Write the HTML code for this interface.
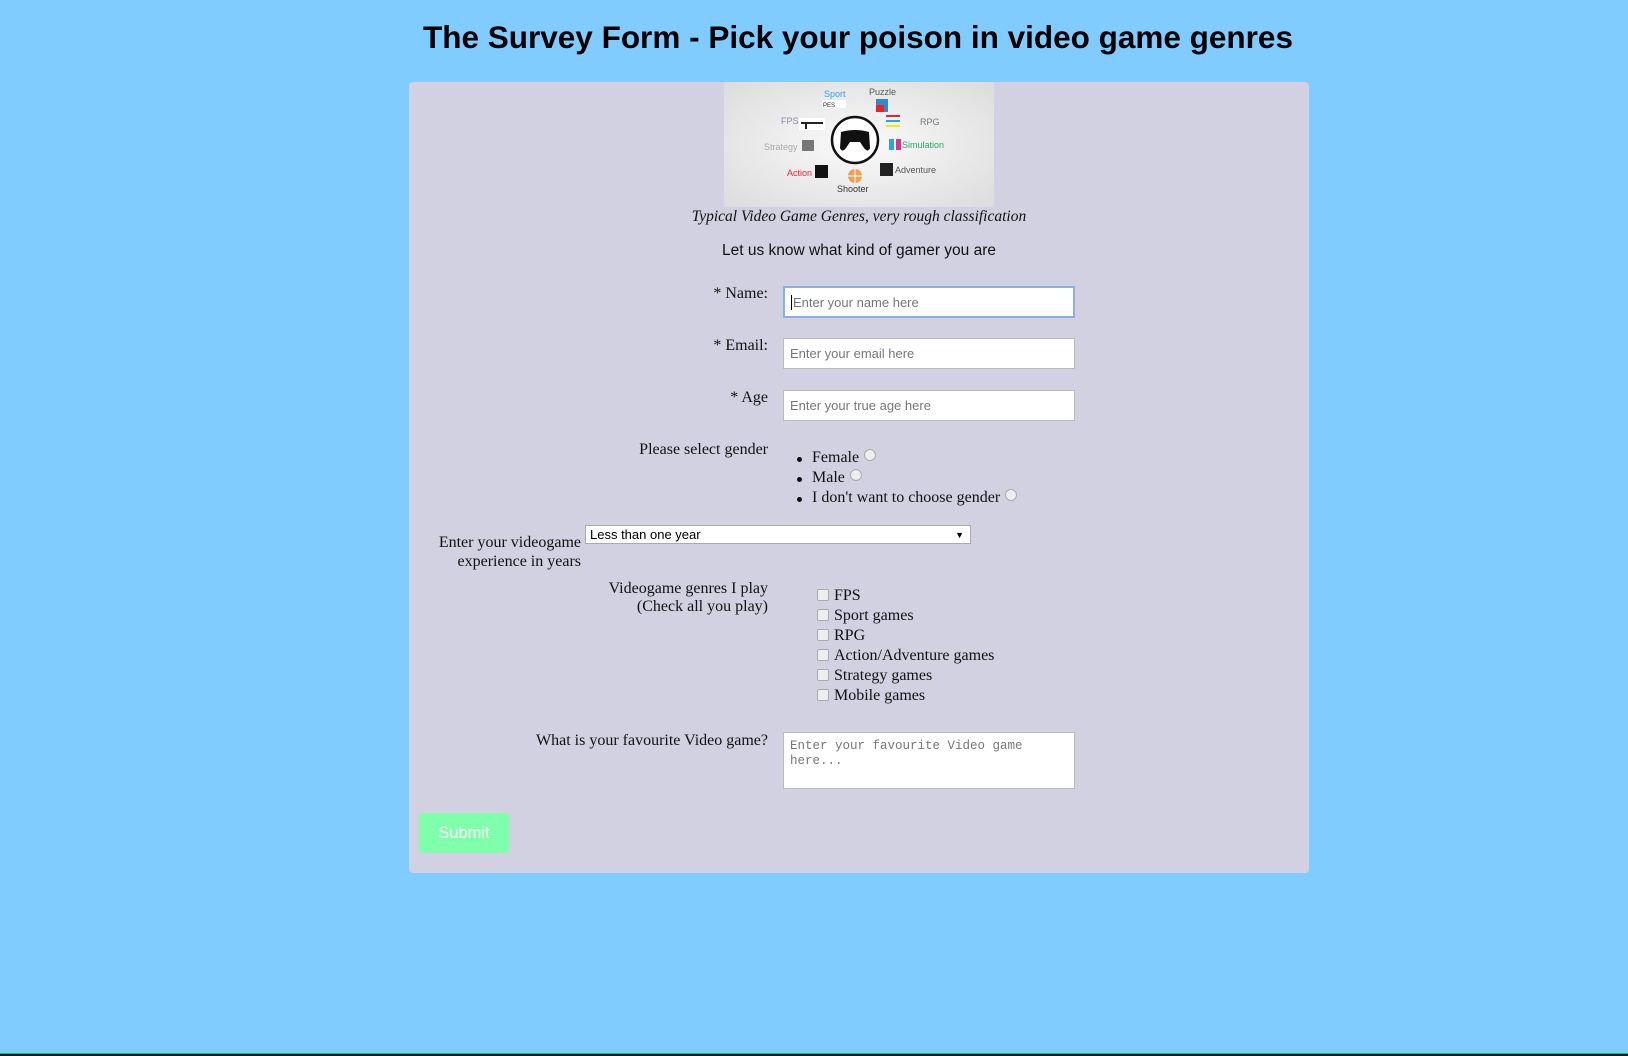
<!DOCTYPE html>
<html><head><meta charset="utf-8">
<style>
*{margin:0;padding:0;box-sizing:border-box}
html,body{width:1628px;height:1056px;overflow:hidden}
body{background:#80cbff;position:relative;font-family:"Liberation Serif",serif;color:#111;font-size:16px}
.bottom{position:absolute;left:0;top:1053px;width:1628px;height:3px;background:#1a1a1a;border-top:1px solid #1bb07a}
h1{position:absolute;left:300px;width:1116px;top:19px;text-align:center;font-family:"Liberation Sans",sans-serif;font-weight:bold;font-size:31.5px;color:#000}
.panel{position:absolute;left:409px;top:82px;width:900px;height:791px;background:#d1d1e1;border-radius:4px}
.a{position:absolute;white-space:nowrap}
.r{text-align:right}
.inp{position:absolute;background:#fff;border:1px solid #bbb;font-family:"Liberation Sans",sans-serif;font-size:13px;color:#777;padding-left:6px;display:flex;align-items:center}
.rad{display:inline-block;width:12px;height:12px;border-radius:50%;border:1px solid #aaa;background:#eee;vertical-align:1px;margin-left:5px}
.cb{position:absolute;width:12px;height:12px;border:1px solid #aaa;border-radius:2px;background:#eee}
.dot{position:absolute;width:5px;height:5px;border-radius:50%;background:#111}
</style></head><body>
<h1>The Survey Form - Pick your poison in video game genres</h1>
<div class="panel"></div>
<svg style="position:absolute;left:724px;top:82px" width="270" height="125" viewBox="0 0 270 125" font-family="Liberation Sans,sans-serif" font-size="9">
<defs><radialGradient id="g" cx="50%" cy="50%" r="70%"><stop offset="0" stop-color="#fafafa"/><stop offset="1" stop-color="#dcdcdc"/></radialGradient></defs>
<rect width="270" height="125" fill="url(#g)"/>
<circle cx="131" cy="58" r="23" fill="#fff" stroke="#111" stroke-width="2.5"/>
<path d="M117 50 Q131 46 145 50 L146 66 Q144 71 140 66 L136 60 L126 60 L122 66 Q118 71 116 66 Z" fill="#111"/>
<text x="100" y="15" fill="#29a8e0">Sport</text>
<rect x="98" y="18" width="24" height="8" fill="#fff"/><text x="99" y="25" font-size="6" fill="#222">PES</text>
<text x="145" y="13" fill="#555">Puzzle</text>
<rect x="152" y="17" width="12" height="13" fill="#2a8ad8"/><rect x="152" y="23" width="8" height="7" fill="#e22"/>
<text x="57" y="42" fill="#8a8aaa">FPS</text>
<rect x="75" y="36" width="26" height="12" fill="#fff"/><path d="M77 41 H99 M82 41 V47" stroke="#222" stroke-width="2"/>
<rect x="162" y="33" width="14" height="2" fill="#e23"/><rect x="162" y="38" width="14" height="2" fill="#2ad"/><rect x="162" y="43" width="14" height="2" fill="#ee0"/>
<text x="196" y="43" fill="#777">RPG</text>
<text x="40" y="68" fill="#aaa">Strategy</text><rect x="78" y="58" width="12" height="11" fill="#777"/>
<rect x="165" y="57" width="5" height="11" fill="#29a8e0"/><rect x="172" y="57" width="5" height="11" fill="#e0308c"/>
<text x="178" y="66" fill="#2aa860">Simulation</text>
<text x="63" y="94" fill="#e23">Action</text><rect x="91" y="83" width="13" height="13" fill="#111"/>
<rect x="156" y="81" width="13" height="13" fill="#222"/><text x="171" y="91" fill="#555">Adventure</text>
<circle cx="131" cy="94" r="7" fill="#f0a050"/><path d="M124 94 H138 M131 87 V101" stroke="#fff" stroke-width="1"/>
<text x="113" y="110" fill="#333">Shooter</text>
</svg>
<div class="a" style="left:409px;width:900px;top:208px;text-align:center;font-style:italic;font-size:15.5px">Typical Video Game Genres, very rough classification</div>
<div class="a" style="left:409px;width:900px;top:242px;text-align:center;font-family:'Liberation Sans',sans-serif;font-size:15.5px">Let us know what kind of gamer you are</div>

<div class="a r" style="left:568px;width:200px;top:285px">* Name:</div>
<div class="inp" style="left:783px;top:286px;width:292px;height:32px;border:2px solid #8aaee8"><span style="border-left:1px solid #000;height:15px;margin-right:1px"></span>Enter your name here</div>
<div class="a r" style="left:568px;width:200px;top:337px">* Email:</div>
<div class="inp" style="left:783px;top:338px;width:292px;height:31px">Enter your email here</div>
<div class="a r" style="left:568px;width:200px;top:389px">* Age</div>
<div class="inp" style="left:783px;top:390px;width:292px;height:31px">Enter your true age here</div>

<div class="a r" style="left:468px;width:300px;top:441px">Please select gender</div>
<div class="dot" style="left:797px;top:457px"></div><div class="a" style="left:812px;top:449px">Female<span class="rad"></span></div>
<div class="dot" style="left:797px;top:477px"></div><div class="a" style="left:812px;top:469px">Male<span class="rad"></span></div>
<div class="dot" style="left:797px;top:497px"></div><div class="a" style="left:812px;top:489px">I don't want to choose gender<span class="rad"></span></div>

<div class="a r" style="left:381px;width:200px;top:533px;line-height:19px">Enter your videogame<br>experience in years</div>
<div class="inp" style="left:585px;top:525px;width:386px;height:19px;color:#000;font-size:13px;padding-left:4px;border-color:#aaa">Less than one year<span style="position:absolute;right:6px;font-size:9px">&#9660;</span></div>

<div class="a r" style="left:468px;width:300px;top:580px;line-height:18px">Videogame genres I play<br>(Check all you play)</div>
<div class="cb" style="left:817px;top:589px"></div><div class="a" style="left:834px;top:587px">FPS</div>
<div class="cb" style="left:817px;top:609px"></div><div class="a" style="left:834px;top:607px">Sport games</div>
<div class="cb" style="left:817px;top:629px"></div><div class="a" style="left:834px;top:627px">RPG</div>
<div class="cb" style="left:817px;top:649px"></div><div class="a" style="left:834px;top:647px">Action/Adventure games</div>
<div class="cb" style="left:817px;top:669px"></div><div class="a" style="left:834px;top:667px">Strategy games</div>
<div class="cb" style="left:817px;top:689px"></div><div class="a" style="left:834px;top:687px">Mobile games</div>

<div class="a r" style="left:468px;width:300px;top:732px">What is your favourite Video game?</div>
<div class="inp" style="left:783px;top:732px;width:292px;height:57px;align-items:flex-start;padding-top:6px;font-family:'Liberation Mono',monospace;font-size:12.5px;line-height:15px">Enter your favourite Video game<br>here...</div>

<div class="a" style="left:419px;top:813px;width:90px;height:40px;background:#80ffaa;border-radius:3px;color:#fff;font-family:'Liberation Sans',sans-serif;font-size:16.5px;display:flex;align-items:center;justify-content:center">Submit</div>
<div class="bottom"></div>
</body></html>
